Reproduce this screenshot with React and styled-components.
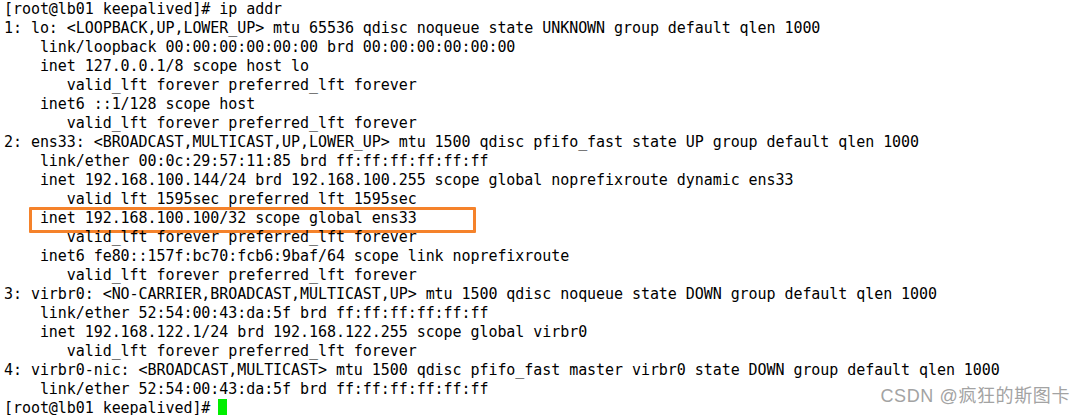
import React from 'react';
import styled, { createGlobalStyle } from 'styled-components';

const GlobalStyle = createGlobalStyle`
  html, body {
    margin: 0;
    padding: 0;
    background: #fff;
  }
`;

const Screen = styled.div`
  position: relative;
  width: 1086px;
  height: 415px;
  overflow: hidden;
  background: #fff;
  padding: 0 0 0 4px;
  box-sizing: border-box;
`;

const Line = styled.div`
  position: relative;
  height: 19px;
  line-height: 19px;
  white-space: pre;
  font-family: "DejaVu Sans Mono", "Liberation Mono", monospace;
  font-size: 15px;
  letter-spacing: -0.06px;
  color: #000;
`;

const Highlight = styled.span`
  position: absolute;
  left: 25px;
  top: -2px;
  width: 447px;
  height: 26px;
  box-sizing: border-box;
  border: 3px solid #f5822a;
  border-radius: 1px;
  pointer-events: none;
`;

const Cursor = styled.span`
  display: inline-block;
  width: 9px;
  height: 17px;
  margin-left: -1px;
  vertical-align: -3px;
  background: #00ee00;
`;

const Watermark = styled.div`
  position: absolute;
  right: 16px;
  bottom: 9px;
  font-family: "Liberation Sans", "Noto Sans CJK SC", sans-serif;
  font-size: 18px;
  line-height: 20px;
  letter-spacing: 0.6px;
  color: #a3a3a3;
`;

const PROMPT = '[root@lb01 keepalived]# ';

const lines = [
  PROMPT + 'ip addr',
  '1: lo: <LOOPBACK,UP,LOWER_UP> mtu 65536 qdisc noqueue state UNKNOWN group default qlen 1000',
  '    link/loopback 00:00:00:00:00:00 brd 00:00:00:00:00:00',
  '    inet 127.0.0.1/8 scope host lo',
  '       valid_lft forever preferred_lft forever',
  '    inet6 ::1/128 scope host ',
  '       valid_lft forever preferred_lft forever',
  '2: ens33: <BROADCAST,MULTICAST,UP,LOWER_UP> mtu 1500 qdisc pfifo_fast state UP group default qlen 1000',
  '    link/ether 00:0c:29:57:11:85 brd ff:ff:ff:ff:ff:ff',
  '    inet 192.168.100.144/24 brd 192.168.100.255 scope global noprefixroute dynamic ens33',
  '       valid_lft 1595sec preferred_lft 1595sec',
  '    inet 192.168.100.100/32 scope global ens33',
  '       valid_lft forever preferred_lft forever',
  '    inet6 fe80::157f:bc70:fcb6:9baf/64 scope link noprefixroute ',
  '       valid_lft forever preferred_lft forever',
  '3: virbr0: <NO-CARRIER,BROADCAST,MULTICAST,UP> mtu 1500 qdisc noqueue state DOWN group default qlen 1000',
  '    link/ether 52:54:00:43:da:5f brd ff:ff:ff:ff:ff:ff',
  '    inet 192.168.122.1/24 brd 192.168.122.255 scope global virbr0',
  '       valid_lft forever preferred_lft forever',
  '4: virbr0-nic: <BROADCAST,MULTICAST> mtu 1500 qdisc pfifo_fast master virbr0 state DOWN group default qlen 1000',
  '    link/ether 52:54:00:43:da:5f brd ff:ff:ff:ff:ff:ff',
];

// the line framed by the orange box
const MARKED = 11;

function App() {
  return (
    <>
      <GlobalStyle />
      <Screen>
        {lines.map((text, i) => (
          <Line key={i}>
            {text}
            {i === MARKED && <Highlight />}
          </Line>
        ))}
        <Line>
          {PROMPT}
          <Cursor />
        </Line>
        <Watermark>CSDN @疯狂的斯图卡</Watermark>
      </Screen>
    </>
  );
}

export default App;
